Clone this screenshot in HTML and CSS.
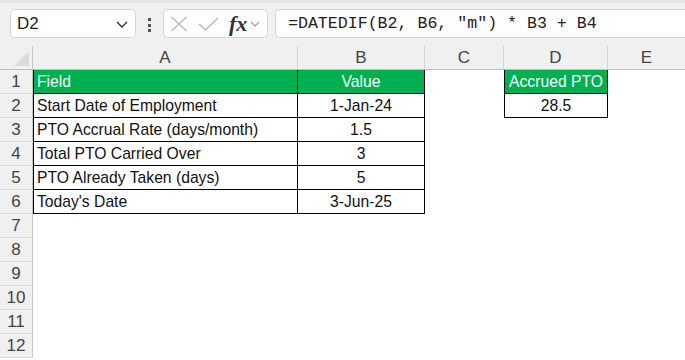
FILE: index.html
```html
<!DOCTYPE html>
<html lang="en">
<head>
    <meta charset="UTF-8">
    <title>Accrued PTO</title>
    <link rel="stylesheet" href="styles.css">
</head>
<body>
<div class="toolbar">
    <div class="namebox">
        <span>D2</span>
        <svg class="chev" width="12" height="7" viewBox="0 0 12 7"><path d="M1 1 L6 6 L11 1" fill="none" stroke="#333" stroke-width="1.4"/></svg>
    </div>
    <div class="dots"><i></i><i></i><i></i></div>
    <div class="fxbox">
        <svg width="18" height="16" viewBox="0 0 18 16"><path d="M1.5 1 L16.5 15 M16.5 1 L1.5 15" stroke="#b4b4b4" stroke-width="1.2" fill="none"/></svg>
        <svg width="21" height="14" viewBox="0 0 21 14"><path d="M1 7 L7.5 13 L20 1" stroke="#b4b4b4" stroke-width="1.2" fill="none"/></svg>
        <span class="fx">fx</span>
        <svg width="10" height="6" viewBox="0 0 10 6"><path d="M1 1 L5 5 L9 1" stroke="#999" stroke-width="1.1" fill="none"/></svg>
    </div>
    <div class="formula">=DATEDIF(B2, B6, "m") * B3 + B4</div>
</div>

<div class="sheet">
    <div class="corner"><span></span></div>
    <div class="colh">A</div>
    <div class="colh">B</div>
    <div class="colh">C</div>
    <div class="colh">D</div>
    <div class="colh last">E</div>

    <div class="rowh">1</div>
    <div class="cell bx bl head left">Field</div>
    <div class="cell bx head">Value</div>
    <div class="cell"></div>
    <div class="cell bx bl head">Accrued PTO</div>
    <div class="cell"></div>

    <div class="rowh">2</div>
    <div class="cell bx bl left">Start Date of Employment</div>
    <div class="cell bx">1-Jan-24</div>
    <div class="cell"></div>
    <div class="cell bx bl">28.5</div>
    <div class="cell"></div>

    <div class="rowh">3</div>
    <div class="cell bx bl left">PTO Accrual Rate (days/month)</div>
    <div class="cell bx">1.5</div>
    <div class="cell"></div><div class="cell"></div><div class="cell"></div>

    <div class="rowh">4</div>
    <div class="cell bx bl left">Total PTO Carried Over</div>
    <div class="cell bx">3</div>
    <div class="cell"></div><div class="cell"></div><div class="cell"></div>

    <div class="rowh">5</div>
    <div class="cell bx bl left">PTO Already Taken (days)</div>
    <div class="cell bx">5</div>
    <div class="cell"></div><div class="cell"></div><div class="cell"></div>

    <div class="rowh">6</div>
    <div class="cell bx bl left">Today's Date</div>
    <div class="cell bx">3-Jun-25</div>
    <div class="cell"></div><div class="cell"></div><div class="cell"></div>

    <div class="rowh">7</div><div class="cell"></div><div class="cell"></div><div class="cell"></div><div class="cell"></div><div class="cell"></div>
    <div class="rowh">8</div><div class="cell"></div><div class="cell"></div><div class="cell"></div><div class="cell"></div><div class="cell"></div>
    <div class="rowh">9</div><div class="cell"></div><div class="cell"></div><div class="cell"></div><div class="cell"></div><div class="cell"></div>
    <div class="rowh">10</div><div class="cell"></div><div class="cell"></div><div class="cell"></div><div class="cell"></div><div class="cell"></div>
    <div class="rowh">11</div><div class="cell"></div><div class="cell"></div><div class="cell"></div><div class="cell"></div><div class="cell"></div>
    <div class="rowh">12</div><div class="cell"></div><div class="cell"></div><div class="cell"></div><div class="cell"></div><div class="cell"></div>
</div>
</body>
</html>
```

FILE: styles.css
```css
*{
    box-sizing: border-box;
}
body{
    margin: 0;
    background: #fff;
    font-family: "Liberation Sans", Arial, sans-serif;
    overflow: hidden;
}
.toolbar{
    height: 46px;
    background: #f0f0f0;
    border-top: 3px solid #e4e4e4;
    display: flex;
    align-items: flex-start;
    padding: 6px 0 0 10px;
}
.namebox{
    width: 126px;
    height: 29px;
    background: #fff;
    border: 1px solid #d5d5d5;
    border-radius: 5px;
    display: flex;
    align-items: center;
    justify-content: space-between;
    padding: 0 7px 0 6px;
    font-size: 17px;
    color: #222;
}
.chev{
    margin-top: 2px;
}
.dots{
    width: 27px;
    display: flex;
    flex-direction: column;
    align-items: center;
    gap: 2.5px;
    padding-top: 9px;
}
.dots i{
    width: 3px;
    height: 3px;
    background: #555;
}
.fxbox{
    width: 105px;
    height: 29px;
    background: #fff;
    border: 1px solid #d5d5d5;
    border-radius: 5px;
    display: flex;
    align-items: center;
    padding: 0 5px 0 6px;
    gap: 10px;
}
.fx{
    font-family: "Liberation Serif", "DejaVu Serif", serif;
    font-style: italic;
    font-weight: bold;
    font-size: 22px;
    color: #333;
    margin-right: -7px;
}
.formula{
    margin-left: 7px;
    flex: 1;
    height: 29px;
    background: #fff;
    border: 1px solid #d5d5d5;
    border-right: none;
    border-radius: 5px 0 0 5px;
    font-family: "Liberation Mono", monospace;
    font-size: 16.6px;
    color: #222;
    line-height: 27px;
    padding-left: 12px;
    white-space: nowrap;
}
.sheet{
    display: grid;
    grid-template-columns: 33px 265px 127px 79px 104px 1fr;
    grid-template-rows: repeat(13, 24px);
    background: #fff;
}
.corner{
    background: #f0f0f0;
    border-right: 1px solid #c8c8c8;
    border-bottom: 1px solid #bdbdbd;
    position: relative;
}
.corner span{
    position: absolute;
    right: 3px;
    bottom: 3px;
    width: 0;
    height: 0;
    border-left: 15px solid transparent;
    border-bottom: 15px solid #dcdcdc;
}
.colh{
    background: #f0f0f0;
    border-right: 1px solid #d4d4d4;
    border-bottom: 1px solid #bdbdbd;
    text-align: center;
    font-size: 17px;
    line-height: 24px;
    color: #444;
}
.colh.last{
    border-right: none;
}
.rowh{
    background: #f0f0f0;
    border-right: 1px solid #c8c8c8;
    border-bottom: 1px solid #dadada;
    text-align: center;
    font-size: 17px;
    line-height: 24px;
    color: #444;
}
.cell{
    font-size: 15.7px;
    line-height: 23px;
    color: #111;
    text-align: center;
    white-space: nowrap;
}
.bx{
    border-right: 1px solid #000;
    border-bottom: 1px solid #000;
}
.bl{
    border-left: 1px solid #000;
}
.left{
    text-align: left;
    padding-left: 3px;
}
.head{
    background: #00b050;
    color: #fff;
}
```
